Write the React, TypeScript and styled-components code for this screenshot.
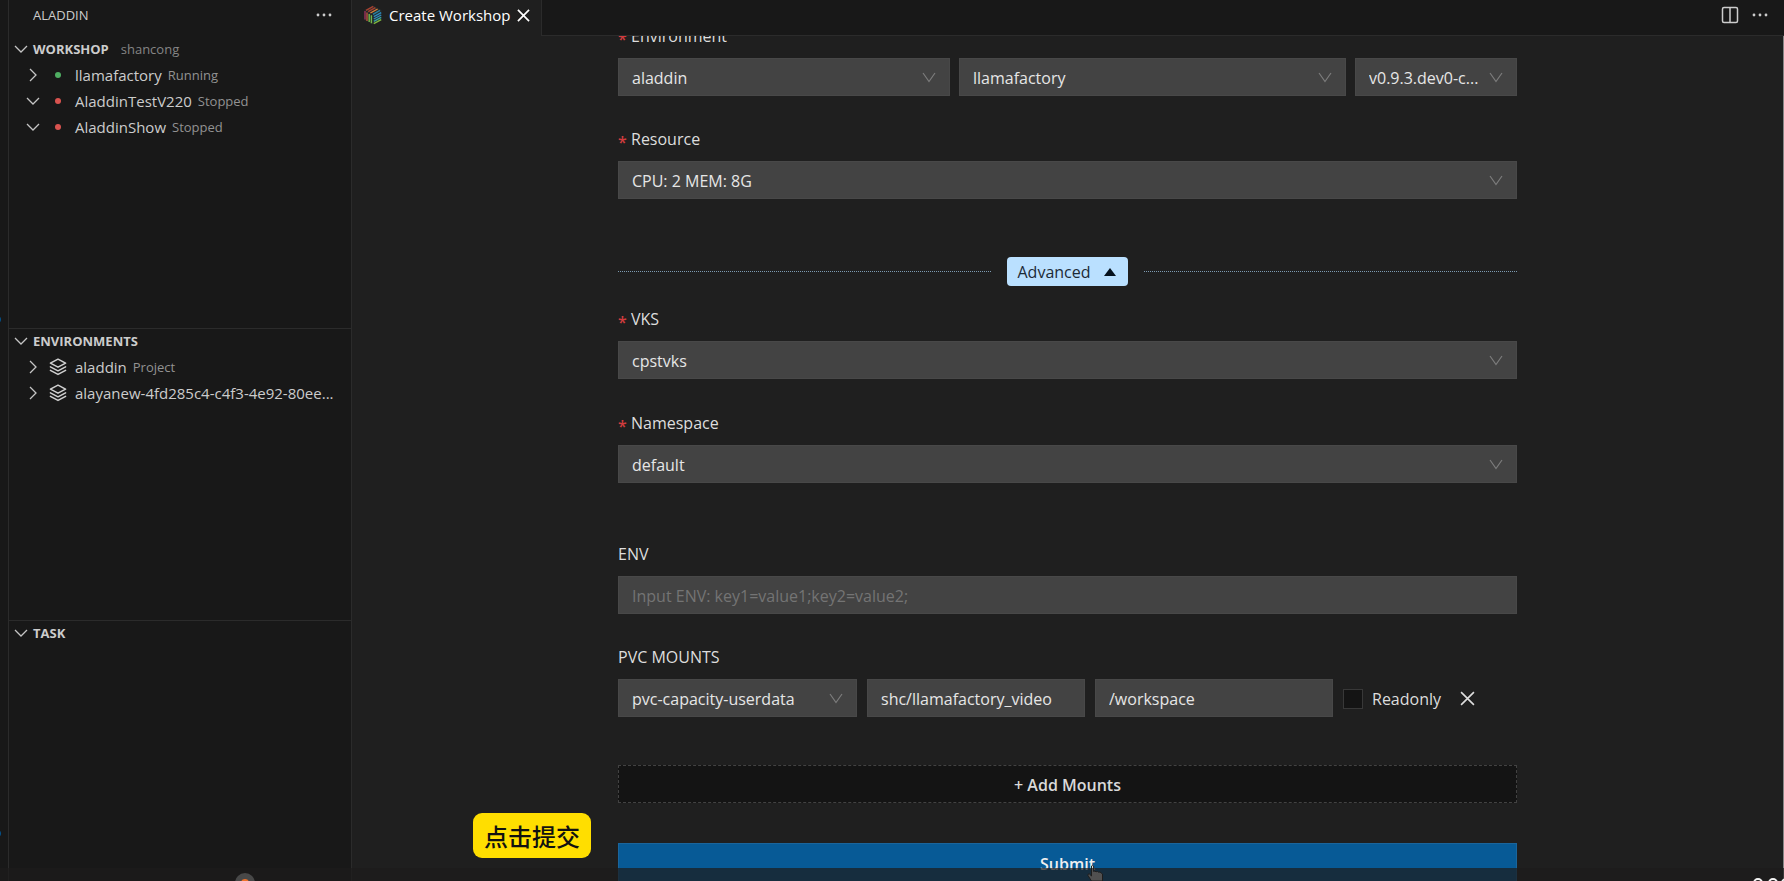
import React from "react";
import styled, { createGlobalStyle } from "styled-components";

const GlobalStyle = createGlobalStyle`
  *, *::before, *::after { box-sizing: border-box; }
  body {
    margin: 0;
    background: #1f1f1f;
    color: #cccccc;
    font-family: "Open Sans", "Noto Sans", "Noto Sans CJK SC", sans-serif;
    font-size: 16px;
  }
  button, input, select { font: inherit; color: inherit; margin: 0; border-radius: 0; }
  svg { flex: none; }
`;

const Window = styled.div`
  position: relative;
  display: flex;
  height: 100vh;
  overflow: hidden;
`;

const ActivityStrip = styled.div`
  position: relative;
  flex: none;
  width: 9px;
  background: #181818;
  border-right: 1px solid #2b2b2b;
  overflow: hidden;
`;

const ActivityBadge = styled.span<{ $top: number }>`
  position: absolute;
  left: -8px;
  top: ${(p) => p.$top}px;
  width: 9px;
  height: 9px;
  border-radius: 50%;
  background: #04528c;
`;

const SideBar = styled.aside`
  flex: none;
  width: 343px;
  background: #181818;
  border-right: 1px solid #2b2b2b;
  overflow: hidden;
`;

const SideHeader = styled.header`
  display: flex;
  align-items: center;
  justify-content: space-between;
  height: 36px;
  padding: 0 18px 6px 24px;
`;

const SideTitle = styled.h2`
  margin: 0;
  font-size: 13px;
  font-weight: 400;
`;

const IconButton = styled.button`
  display: inline-flex;
  align-items: center;
  justify-content: center;
  padding: 0;
  border: 0;
  background: none;
  cursor: pointer;
`;

const Section = styled.section`
  height: 292px;
  border-top: 1px solid #2b2b2b;
  &:first-of-type { border-top-color: transparent; }
`;

const SectionHeader = styled.button`
  display: flex;
  align-items: center;
  width: 100%;
  height: 25px;
  padding: 0 0 1px 4px;
  border: 0;
  background: none;
  font-size: 13px;
  text-align: left;
  gap: 4px;
`;

const SectionTitle = styled.span`
  font-weight: 700;
`;

const Muted = styled.span`
  font-size: 13px;
  color: #929292;
`;

const SectionNote = styled(Muted)`
  margin-left: 8px;
  color: #858585;
`;

const Tree = styled.ul`
  margin: 0;
  padding: 0;
  list-style: none;
`;

const TreeRow = styled.li`
  display: flex;
  align-items: center;
  height: 26px;
  padding: 0 8px 0 16px;
  font-size: 15px;
  white-space: nowrap;
`;

const TreeIcon = styled.span`
  display: flex;
  align-items: center;
  justify-content: center;
  width: 34px;
  flex: none;
`;

const TreeLabel = styled.span`
  margin-right: 6px;
`;

const StatusDot = styled.i<{ $running: boolean }>`
  width: 6px;
  height: 6px;
  border-radius: 50%;
  background: ${(p) => (p.$running ? "#4fae62" : "#d9534f")};
`;

const Editor = styled.main`
  display: flex;
  flex: 1;
  flex-direction: column;
  min-width: 0;
`;

const TabBar = styled.div`
  display: flex;
  flex: none;
  height: 36px;
  background: #181818;
`;

const Tab = styled.div`
  display: flex;
  align-items: center;
  gap: 7px;
  padding: 0 11px 6px 12px;
  background: #1f1f1f;
  border-right: 1px solid #2b2b2b;
  color: #ffffff;
  font-size: 15px;
  white-space: nowrap;
`;

const TabActions = styled.div`
  display: flex;
  flex: 1;
  align-items: center;
  justify-content: flex-end;
  gap: 12px;
  padding: 0 15px 6px 0;
  border-bottom: 1px solid #2b2b2b;
`;

const EditorBody = styled.div`
  flex: 1;
  min-height: 0;
  overflow: hidden;
  border-right: 1px solid #858585;
`;

const Form = styled.form`
  display: flex;
  flex-direction: column;
  width: 63%;
  max-width: 899px;
  margin: -13px auto 0;
`;

const Field = styled.div`
  display: flex;
  flex-direction: column;
  margin-bottom: 30px;
`;

const Label = styled.label`
  height: 26px;
  margin-bottom: 9px;
  line-height: 26px;
  color: #dddddd;
`;

const Required = styled.span`
  display: inline-block;
  width: 13px;
  height: 26px;
  color: #d23c3e;
  font-weight: 600;
  line-height: 32px;
  vertical-align: top;
`;

const EnvironmentGrid = styled.div`
  display: grid;
  grid-template-columns: 332fr 387fr 162fr;
  gap: 9px;
`;

const MountGrid = styled.div`
  display: grid;
  grid-template-columns: 239fr 218fr 238fr 174fr;
  gap: 10px;
`;

const SelectBox = styled.div`
  position: relative;
  min-width: 0;
`;

const Select = styled.select`
  display: block;
  width: 100%;
  height: 38px;
  padding: 1px 34px 0 13px;
  border: 1px solid #484848;
  background: #434343;
  color: #e6e6e6;
  appearance: none;
  text-overflow: ellipsis;
`;

const SelectArrow = styled.svg`
  position: absolute;
  right: 14px;
  top: 14px;
  pointer-events: none;
`;

const TextInput = styled.input`
  width: 100%;
  min-width: 0;
  height: 38px;
  padding: 1px 13px 0;
  border: 1px solid #484848;
  background: #434343;
  color: #e6e6e6;
  &::placeholder { color: #747474; opacity: 1; }
`;

const Divider = styled.div`
  display: flex;
  align-items: center;
  gap: 16px;
  margin: 28px 0 20px;
  &::before, &::after {
    content: "";
    flex: 1;
    border-top: 1px dotted #7d9bb2;
  }
`;

const AdvancedButton = styled.button`
  display: flex;
  align-items: center;
  gap: 13px;
  height: 29px;
  padding: 0 12px 0 10px;
  border: 0;
  border-radius: 4px;
  background: #bae0ff;
  color: #1c2a36;
`;

const AdvancedFields = styled.div`
  display: grid;
  gap: 1px;
  margin-bottom: 28px;
`;

const ReadonlyGroup = styled.div`
  display: flex;
  align-items: center;
  padding-top: 1px;
  color: #dddddd;
`;

const CheckLabel = styled.label`
  display: flex;
  align-items: center;
  gap: 9px;
  margin-right: 19px;
`;

const Checkbox = styled.input`
  width: 20px;
  height: 20px;
  border: 1px solid #383838;
  background: #141414;
  appearance: none;
`;

const AddButton = styled.button`
  height: 38px;
  margin: 18px 0 40px;
  padding: 1px 0 0;
  border: 1px dashed #424242;
  background: #141414;
  color: #d9d9d9;
  font-weight: 600;
`;

const SubmitButton = styled.button`
  height: 42px;
  padding: 0;
  border: 1px solid #1a659c;
  background: #075a96;
  color: #f0f0f0;
  font-weight: 600;
`;

const Caption = styled.div`
  position: absolute;
  left: 473px;
  bottom: 23px;
  padding: 0 11px;
  border-radius: 9px;
  background: #ffde00;
  color: #111111;
  font: 500 24px/45px "Noto Sans CJK SC", sans-serif;
`;

const HandPointer = styled.svg`
  position: absolute;
  left: 1087px;
  bottom: 0;
`;

const PlayerBar = styled.div`
  position: absolute;
  inset: auto 0 0 0;
  height: 13px;
  background: rgba(29, 28, 28, 0.72);
  overflow: hidden;
`;

const PlayerHandle = styled.span`
  position: absolute;
  left: 235px;
  top: 5px;
  width: 20px;
  height: 20px;
  border: 6px solid #484848;
  border-radius: 50%;
  background: #f0722a;
`;

const PlayerRings = styled.svg`
  position: absolute;
  right: 0;
  bottom: 0;
`;

function Chevron({ open }: { open: boolean }) {
  return (
    <svg width="16" height="16" viewBox="0 0 16 16" fill="none" stroke="#c5c5c5" strokeWidth="1.3">
      <path d={open ? "M2 5 8 11 14 5" : "M5 2 11 8 5 14"} />
    </svg>
  );
}

function Layers() {
  return (
    <svg width="18" height="18" viewBox="0 0 18 18" fill="none" stroke="#d0d0d0" strokeWidth="1.5" strokeLinejoin="round" strokeLinecap="round">
      <path d="M9 1.2 16.6 5.2 9 9.2 1.4 5.2Z" />
      <path d="M1.4 8.8 9 12.8 16.6 8.8" />
      <path d="M1.4 12.4 9 16.4 16.6 12.4" />
    </svg>
  );
}

function Dots() {
  return (
    <svg width="18" height="16" viewBox="0 0 18 16" fill="#cccccc">
      <circle cx="3" cy="8" r="1.4" />
      <circle cx="9" cy="8" r="1.4" />
      <circle cx="15" cy="8" r="1.4" />
    </svg>
  );
}

function Cross({ size, width }: { size: number; width: number }) {
  return (
    <svg width={size} height={size} viewBox="0 0 14 14" fill="none" stroke="currentColor" strokeWidth={width}>
      <path d="M1 1 13 13M13 1 1 13" />
    </svg>
  );
}

function CubeLogo() {
  return (
    <svg width="18" height="20" viewBox="0 0 18 20" fill="none" strokeWidth="1.4">
      <path d="M9 .5 17.5 5V15L9 19.5.5 15V5Z" fill="#242a2a" />
      <path d="M2 5.3 9.3 1.3M4.2 6.7 11.4 2.7" stroke="#a8402f" />
      <path d="M6.4 8 13.6 4" stroke="#d9803a" />
      <path d="M9 9.4 16 5.4" stroke="#2b7f9e" />
      <path d="M1 6V14.6" stroke="#9b2f5b" />
      <path d="M3 7.4V16" stroke="#b8553a" />
      <path d="M5.2 9V17M7.4 10.2V18.2" stroke="#74b848" />
      <path d="M9.8 11.6 17.2 7.6M9.8 14 17.2 10" stroke="#2e8ac0" />
      <path d="M9.8 16.4 17.2 12.4" stroke="#35a3a2" />
      <path d="M9.8 18.6 17.2 14.6" stroke="#7fb83f" />
    </svg>
  );
}

function SplitEditor() {
  return (
    <svg width="18" height="18" viewBox="0 0 18 18" fill="none" stroke="#cccccc" strokeWidth="1.5">
      <rect x="1.5" y="1.5" width="15" height="15" rx="1.5" />
      <path d="M9 1.5V16.5" />
    </svg>
  );
}

function Picker({ id, value, label }: { id: string; value: string; label?: string }) {
  return (
    <SelectBox>
      <Select id={id} aria-label={label} defaultValue={value}>
        <option>{value}</option>
      </Select>
      <SelectArrow width="14" height="12" viewBox="0 0 14 12" fill="none" stroke="#7c7c7c" strokeWidth="1.2">
        <path d="M1 1 7 9.500 13 1" />
      </SelectArrow>
    </SelectBox>
  );
}

function RequiredLabel({ htmlFor, children }: { htmlFor: string; children: string }) {
  return (
    <Label htmlFor={htmlFor}>
      <Required>*</Required>
      {children}
    </Label>
  );
}

const workshops = [
  { name: "llamafactory", status: "Running", open: false },
  { name: "AladdinTestV220", status: "Stopped", open: true },
  { name: "AladdinShow", status: "Stopped", open: true },
];

const environments = [
  { name: "aladdin", note: "Project" },
  { name: "alayanew-4fd285c4-c4f3-4e92-80ee...", note: "" },
];

export default function App() {
  return (
    <>
      <GlobalStyle />
      <Window>
        <ActivityStrip>
          <ActivityBadge $top={315} />
          <ActivityBadge $top={829} />
        </ActivityStrip>
        <SideBar>
          <SideHeader>
            <SideTitle>ALADDIN</SideTitle>
            <IconButton aria-label="More actions"><Dots /></IconButton>
          </SideHeader>
          <Section>
            <SectionHeader>
              <Chevron open />
              <SectionTitle>WORKSHOP</SectionTitle>
              <SectionNote>shancong</SectionNote>
            </SectionHeader>
            <Tree>
              {workshops.map((w) => (
                <TreeRow key={w.name}>
                  <Chevron open={w.open} />
                  <TreeIcon><StatusDot $running={w.status === "Running"} /></TreeIcon>
                  <TreeLabel>{w.name}</TreeLabel>
                  <Muted>{w.status}</Muted>
                </TreeRow>
              ))}
            </Tree>
          </Section>
          <Section>
            <SectionHeader>
              <Chevron open />
              <SectionTitle>ENVIRONMENTS</SectionTitle>
            </SectionHeader>
            <Tree>
              {environments.map((e) => (
                <TreeRow key={e.name}>
                  <Chevron open={false} />
                  <TreeIcon><Layers /></TreeIcon>
                  <TreeLabel>{e.name}</TreeLabel>
                  {e.note && <Muted>{e.note}</Muted>}
                </TreeRow>
              ))}
            </Tree>
          </Section>
          <Section>
            <SectionHeader>
              <Chevron open />
              <SectionTitle>TASK</SectionTitle>
            </SectionHeader>
          </Section>
        </SideBar>
        <Editor>
          <TabBar>
            <Tab>
              <CubeLogo />
              Create Workshop
              <IconButton aria-label="Close tab"><Cross size={13} width={1.8} /></IconButton>
            </Tab>
            <TabActions>
              <IconButton aria-label="Split editor"><SplitEditor /></IconButton>
              <IconButton aria-label="More actions"><Dots /></IconButton>
            </TabActions>
          </TabBar>
          <EditorBody>
            <Form onSubmit={(e) => e.preventDefault()}>
              <Field>
                <RequiredLabel htmlFor="environment">Environment</RequiredLabel>
                <EnvironmentGrid>
                  <Picker id="environment" value="aladdin" />
                  <Picker id="image" label="Image" value="llamafactory" />
                  <Picker id="version" label="Version" value="v0.9.3.dev0-c..." />
                </EnvironmentGrid>
              </Field>
              <Field>
                <RequiredLabel htmlFor="resource">Resource</RequiredLabel>
                <Picker id="resource" value="CPU: 2 MEM: 8G" />
              </Field>
              <Divider>
                <AdvancedButton type="button">
                  Advanced
                  <svg width="12" height="8" viewBox="0 0 12 8" fill="#06121e"><path d="M6 0 12 8H0Z" /></svg>
                </AdvancedButton>
              </Divider>
              <AdvancedFields>
                <Field>
                  <RequiredLabel htmlFor="vks">VKS</RequiredLabel>
                  <Picker id="vks" value="cpstvks" />
                </Field>
                <Field>
                  <RequiredLabel htmlFor="namespace">Namespace</RequiredLabel>
                  <Picker id="namespace" value="default" />
                </Field>
              </AdvancedFields>
              <Field>
                <Label htmlFor="env">ENV</Label>
                <TextInput id="env" placeholder="Input ENV: key1=value1;key2=value2;" />
              </Field>
              <Field>
                <Label htmlFor="pvc">PVC MOUNTS</Label>
                <MountGrid>
                  <Picker id="pvc" value="pvc-capacity-userdata" />
                  <TextInput aria-label="Source path" defaultValue="shc/llamafactory_video" />
                  <TextInput aria-label="Mount path" defaultValue="/workspace" />
                  <ReadonlyGroup>
                    <CheckLabel>
                      <Checkbox type="checkbox" />
                      Readonly
                    </CheckLabel>
                    <IconButton type="button" aria-label="Remove mount"><Cross size={15} width={1.5} /></IconButton>
                  </ReadonlyGroup>
                </MountGrid>
              </Field>
              <AddButton type="button">+ Add Mounts</AddButton>
              <SubmitButton type="submit">Submit</SubmitButton>
            </Form>
          </EditorBody>
        </Editor>
        <HandPointer width="17" height="17" viewBox="0 0 17 17" fill="#d8d8d8" stroke="#222222" strokeWidth="1">
          <path d="M4.5 17 1 11.5Q.6 9.800 2.200 9.800L4.500 12V2Q5.500.6 6.600 2V7.500Q8 6.500 9 7.800 10.500 6.800 11.600 8.200 13.200 7.400 14.200 9L15.500 10V17Z" />
        </HandPointer>
        <PlayerBar>
          <PlayerHandle />
          <PlayerRings width="32" height="6" viewBox="0 0 32 6" fill="none" stroke="#f4f4f4" strokeWidth="2">
            <circle cx="6" cy="8" r="4" />
            <circle cx="21" cy="8" r="4" />
            <circle cx="34" cy="8" r="4" />
          </PlayerRings>
        </PlayerBar>
        <Caption>点击提交</Caption>
      </Window>
    </>
  );
}
